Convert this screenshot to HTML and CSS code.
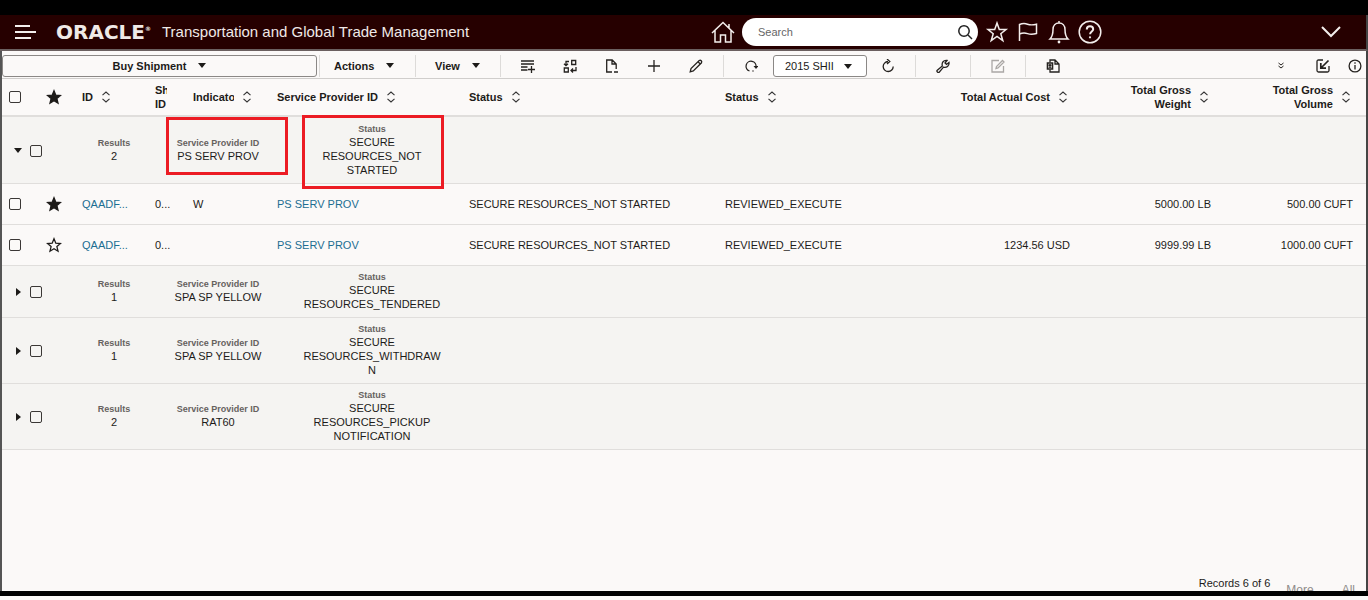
FILE: index.html
```html
<!DOCTYPE html>
<html lang="en">
<head>
  <meta charset="UTF-8" />
  <meta name="viewport" content="width=device-width, initial-scale=1" />
  <title>Transportation and Global Trade Management</title>
  <link rel="stylesheet" href="styles.css">
</head>
<body>

  <!-- Shared icons -->
  <svg class="sprite" aria-hidden="true">
    <symbol id="sort" viewBox="0 0 14 14"><path d="M3.500 5.200 7 2l3.500 3.200M3.500 8.800 7 12l3.500-3.200" fill="none" stroke="#333" stroke-width="1.1"/></symbol>
    <symbol id="star" viewBox="0 0 16 16"><path d="M8 1.800l1.800 4.400 4.700.3-3.600 3.100 1.100 4.600L8 11.700l-4 2.500 1.100-4.600L1.500 6.500l4.700-.3z" stroke-width="1.300" stroke-linejoin="miter"/></symbol>
  </svg>

  <header class="header">
    <button class="head-btn menu" aria-label="Menu"><svg width="22" height="16" viewBox="0 0 22 16"><path d="M0 2h15M0 8h21M0 14h16"/></svg></button>
    <div class="logo">ORACLE<sup>®</sup></div>
    <h1>Transportation and Global Trade Management</h1>
    <div class="head-tools">
      <button class="head-btn" aria-label="Home"><svg width="24" height="24" viewBox="0 0 24 24"><path d="M1 13 12 2.500 23 13M4 10.500V22h5.500v-7h5v7H20V10.500M18 8V4"/></svg></button>
      <div class="search">
        <input type="text" placeholder="Search" aria-label="Search" />
        <button aria-label="Run search"><svg width="16" height="16" viewBox="0 0 16 16"><circle cx="7" cy="7" r="5.200"/><path d="M11 11l4 4"/></svg></button>
      </div>
      <button class="head-btn" aria-label="Favorites"><svg width="24" height="24" viewBox="0 0 24 24"><path d="M12 3l2.300 6.500h6.700l-5.200 4.200 2 7L12 16.500l-5.800 4.200 2-7L3 9.500h6.700z"/></svg></button>
      <button class="head-btn" aria-label="Watchlist"><svg width="24" height="24" viewBox="0 0 24 24"><path d="M3.500 21V4.500c3-1.200 5.500-1.200 8-.3s5.500.9 9 0V13.500c-3.500 1-6.500 1-9 .1s-5-.9-8 .4"/></svg></button>
      <button class="head-btn" aria-label="Notifications"><svg width="24" height="24" viewBox="0 0 24 24"><path d="M12 1v2M3 19c2-2 3-4.500 3-9.500C6 5.500 8.500 3 12 3s6 2.500 6 6.500c0 5 1 7.500 3 9.500z"/><circle cx="12" cy="22" r="1.400" class="dot"/></svg></button>
      <button class="head-btn" aria-label="Help"><svg width="24" height="24" viewBox="0 0 24 24"><circle cx="12" cy="12" r="10.800"/><path d="M8.800 9.500c0-2 1.400-3.200 3.200-3.200s3.200 1.200 3.200 2.900c0 2.300-3.100 2.500-3.100 5.100" stroke-width="2"/><circle cx="12" cy="17.300" r="1.100" class="dot"/></svg></button>
      <button class="head-btn user-menu" aria-label="User menu"><svg width="20" height="14" viewBox="0 0 20 14"><path d="M1 2l9 9 9-9" stroke-width="2"/></svg></button>
    </div>
  </header>

  <main class="main">
    <div class="toolbar">
      <button class="screen-set">Buy Shipment <i class="caret"></i></button>
      <span class="sep flush"></span>
      <button class="menu-btn">Actions <i class="caret"></i></button>
      <span class="sep flush"></span>
      <button class="menu-btn view">View <i class="caret"></i></button>
      <span class="sep"></span>
      <button class="tool" aria-label="Add row"><svg width="14" height="14" viewBox="0 0 14 14"><path d="M0 2h13M0 5h13M0 8h6.500M0 11h6.500M10.500 7v7M7 10.500h7"/></svg></button>
      <button class="tool" aria-label="Swap"><svg width="14" height="14" viewBox="0 0 14 14"><path d="M8.700 1.500h4v4h-4zM1.300 9h4v4h-4zM6 2.500H3v4M1 4.700l2 2 2-2M13 8v3.500H8M10 9.500l-2 2 2 2"/></svg></button>
      <button class="tool" aria-label="New document"><svg width="14" height="14" viewBox="0 0 14 14"><path d="M7 13H1.700V1h5.500l4 4v5M7 1v4h4M9 13h4"/></svg></button>
      <button class="tool" aria-label="Add"><svg width="14" height="14" viewBox="0 0 14 14"><path d="M7 1v12M1 7h12"/></svg></button>
      <button class="tool" aria-label="Edit"><svg width="14" height="14" viewBox="0 0 14 14"><path d="M1.200 12.800l.8-3.300 8.200-8c1.600-.8 3.100.8 2.300 2.300l-8.200 8.200zM9 2.700l2.300 2.300"/></svg></button>
      <span class="sep"></span>
      <button class="tool" aria-label="Rerun"><svg width="14" height="14" viewBox="0 0 14 14"><path d="M5.500 12A5 5 0 1 1 12 8M8.500 12h1"/><path d="M9.500 7h5L12 10z" fill="#25221f" stroke="none"/></svg></button>
      <span class="select-wrap">
        <select aria-label="Layout"><option>2015 SHII</option></select>
        <i class="caret"></i>
      </span>
      <button class="tool" aria-label="Refresh"><svg width="14" height="14" viewBox="0 0 14 14"><path d="M7 2.500a5 5 0 1 0 5.200 5M6 0l2.800 2.500L6 5"/></svg></button>
      <span class="sep"></span>
      <button class="tool" aria-label="Settings"><svg width="14" height="14" viewBox="0 0 14 14"><path d="M1 11.500 6.300 7C5.500 3.500 7.500 1 11 1.500L9 4l1.500 1.500L13 3.500C13.500 7 10.500 9 7.500 8.200L3 13.500c-1 .5-2.500-1-2-2z"/></svg></button>
      <span class="sep"></span>
      <button class="tool" aria-label="Mass update" disabled><svg width="14" height="14" viewBox="0 0 14 14"><path d="M8 1.500H1v11.500h11.500V7M5 9.500l.5-2L11.500 1.500l1.500 1.500L7 9z"/></svg></button>
      <span class="sep"></span>
      <button class="tool" aria-label="Export to Excel"><svg width="14" height="14" viewBox="0 0 14 14"><path d="M4 3.500V1h5l4 4v8H4v-2.500M9 1v4h4"/><path d="M1.500 4h5v6h-5zM3 5.500l2 3M5 5.500l-2 3" stroke-width="1.600"/></svg></button>
      <div class="toolbar-right">
        <button class="tool" aria-label="More tools"><svg width="8" height="8" viewBox="0 0 8 8"><path d="M1.500 1 4 3l2.500-2M1.500 4 4 6l2.500-2" stroke-width="1"/></svg></button>
        <button class="tool" aria-label="Open"><svg width="14" height="14" viewBox="0 0 14 14"><path d="M7 1H2.500Q1 1 1 2.500v9Q1 13 2.500 13h9q1.500 0 1.500-1.500V7"/><path d="M12.500 1.500 5 9M4.800 4v5.200H10" stroke-width="1.700"/></svg></button>
        <button class="tool info" aria-label="Information"><svg width="14" height="14" viewBox="0 0 14 14"><circle cx="7" cy="7" r="5.900"/><path d="M7 6v4.500M7 3.300v1.400"/></svg></button>
      </div>
    </div>

    <div class="results">
      <table>
        <colgroup>
          <col class="c-check"><col class="c-star"><col class="c-id"><col class="c-ship"><col class="c-ind">
          <col class="c-prov"><col class="c-status"><col><col class="c-cost"><col class="c-weight"><col class="c-volume">
        </colgroup>
        <thead>
          <tr>
            <th class="check"><input type="checkbox" aria-label="Select all" /></th>
            <th class="fav"><svg class="star full"><use href="#star"/></svg></th>
            <th><div class="th">ID <svg class="sort"><use href="#sort"/></svg></div></th>
            <th><div class="clip short">Sh<br>ID</div></th>
            <th><div class="th"><span class="clip ind">Indicator</span> <svg class="sort"><use href="#sort"/></svg></div></th>
            <th><div class="th">Service Provider ID <svg class="sort"><use href="#sort"/></svg></div></th>
            <th><div class="th">Status <svg class="sort"><use href="#sort"/></svg></div></th>
            <th><div class="th">Status <svg class="sort"><use href="#sort"/></svg></div></th>
            <th class="num"><div class="th">Total Actual Cost <svg class="sort"><use href="#sort"/></svg></div></th>
            <th class="num"><div class="th"><span>Total Gross<br>Weight</span> <svg class="sort"><use href="#sort"/></svg></div></th>
            <th class="num"><div class="th"><span>Total Gross<br>Volume</span> <svg class="sort"><use href="#sort"/></svg></div></th>
          </tr>
        </thead>
        <tbody>
          <tr class="group">
            <td colspan="11">
              <div class="group-row">
                <button class="toggle" aria-label="Collapse group"><i class="caret"></i></button>
                <input type="checkbox" aria-label="Select group" />
                <div class="field count"><b>Results</b>2</div>
                <div class="field provider"><b>Service Provider ID</b>PS SERV PROV</div>
                <div class="field status"><b>Status</b>SECURE RESOURCES_NOT STARTED</div>
              </div>
            </td>
          </tr>
          <tr>
            <td class="check"><input type="checkbox" aria-label="Select row" /></td>
            <td class="fav"><svg class="star full"><use href="#star"/></svg></td>
            <td><a href="#">QAADF...</a></td>
            <td>0...</td>
            <td>W</td>
            <td><a href="#">PS SERV PROV</a></td>
            <td>SECURE RESOURCES_NOT STARTED</td>
            <td>REVIEWED_EXECUTE</td>
            <td class="num"></td>
            <td class="num">5000.00 LB</td>
            <td class="num">500.00 CUFT</td>
          </tr>
          <tr>
            <td class="check"><input type="checkbox" aria-label="Select row" /></td>
            <td class="fav"><svg class="star"><use href="#star"/></svg></td>
            <td><a href="#">QAADF...</a></td>
            <td>0...</td>
            <td></td>
            <td><a href="#">PS SERV PROV</a></td>
            <td>SECURE RESOURCES_NOT STARTED</td>
            <td>REVIEWED_EXECUTE</td>
            <td class="num">1234.56 USD</td>
            <td class="num">9999.99 LB</td>
            <td class="num">1000.00 CUFT</td>
          </tr>
          <tr class="group">
            <td colspan="11">
              <div class="group-row">
                <button class="toggle" aria-label="Expand group"><i class="caret closed"></i></button>
                <input type="checkbox" aria-label="Select group" />
                <div class="field count"><b>Results</b>1</div>
                <div class="field provider"><b>Service Provider ID</b>SPA SP YELLOW</div>
                <div class="field status"><b>Status</b>SECURE RESOURCES_TENDERED</div>
              </div>
            </td>
          </tr>
          <tr class="group">
            <td colspan="11">
              <div class="group-row">
                <button class="toggle" aria-label="Expand group"><i class="caret closed"></i></button>
                <input type="checkbox" aria-label="Select group" />
                <div class="field count"><b>Results</b>1</div>
                <div class="field provider"><b>Service Provider ID</b>SPA SP YELLOW</div>
                <div class="field status"><b>Status</b>SECURE RESOURCES_WITHDRAWN</div>
              </div>
            </td>
          </tr>
          <tr class="group">
            <td colspan="11">
              <div class="group-row">
                <button class="toggle" aria-label="Expand group"><i class="caret closed"></i></button>
                <input type="checkbox" aria-label="Select group" />
                <div class="field count"><b>Results</b>2</div>
                <div class="field provider"><b>Service Provider ID</b>RAT60</div>
                <div class="field status"><b>Status</b>SECURE RESOURCES_PICKUP NOTIFICATION</div>
              </div>
            </td>
          </tr>
        </tbody>
      </table>
      <!-- Callouts over the first group -->
      <div class="callout callout-provider"></div>
      <div class="callout callout-status"></div>
    </div>

    <div class="footer">
      <span>Records 6 of 6</span>
      <a href="#" class="more">More</a>
      <a href="#" class="all">All</a>
    </div>
  </main>
  <div class="bottom-strip"></div>

</body>
</html>
```
FILE: styles.css
```css
* { margin: 0; padding: 0; box-sizing: border-box; }
body {
  height: 100vh;
  display: flex;
  flex-direction: column;
  overflow: hidden;
  border-top: 15px solid #000;
  background: #fbf9f8;
  color: #1d1b19;
  font: 11px/14px "Liberation Sans", Arial, sans-serif;
}
button, input, select { font: inherit; color: inherit; }
button { background: none; border: none; cursor: pointer; }
svg { display: block; fill: none; }
a { color: #1c6e92; text-decoration: none; }
.sprite { position: absolute; width: 0; height: 0; }

/* Header */
.header {
  display: flex;
  align-items: center;
  height: 36px;
  flex: none;
  padding: 0 25px 1px 15px;
  background: #260000;
  border-right: 2px solid #444;
  border-bottom: 2px solid #6b6060;
  color: #efe9e7;
}
.head-btn svg { stroke: #f3eeec; stroke-width: 1.5; }
.head-btn .dot { fill: #f3eeec; stroke: none; }
.menu { margin-right: 19px; }
.menu svg { stroke-width: 2; }
.logo {
  width: 106px;
  white-space: nowrap;
  font: bold 20px/24px "DejaVu Sans", sans-serif;
}
.logo sup { font-size: 6px; line-height: 6px; vertical-align: 8px; }
h1 { font-size: 15px; line-height: 20px; font-weight: normal; white-space: nowrap; }
.head-tools {
  display: flex;
  align-items: center;
  gap: 7px;
  margin-left: auto;
}
.search {
  display: flex;
  align-items: center;
  width: 236px;
  height: 28px;
  padding: 0 5px 0 16px;
  background: #fff;
  border-radius: 14px;
}
.search input {
  flex: 1;
  min-width: 0;
  border: none;
  outline: none;
  background: none;
  color: #333;
}
.search input::placeholder { color: #666; opacity: 1; }
.search svg { stroke: #222; stroke-width: 1.5; }
.user-menu { margin-left: 212px; }

/* Toolbar */
.main {
  flex: 1;
  min-height: 0;
  display: flex;
  flex-direction: column;
  border-left: 2px solid #555;
  border-right: 2px solid #444;
}
.toolbar {
  display: flex;
  align-items: center;
  height: 28px;
  flex: none;
  padding-top: 2px;
  border-bottom: 1px solid #d0cecc;
}
.screen-set, .menu-btn {
  display: flex;
  align-items: center;
  height: 22px;
  font-weight: bold;
}
.screen-set {
  justify-content: center;
  gap: 12px;
  width: 315px;
  margin-right: 2px;
  border: 1px solid #8b8886;
  border-radius: 3px;
}
.menu-btn { gap: 12px; width: 95px; padding-left: 14px; }
.menu-btn.view { width: 84px; padding-left: 19px; }
.sep { width: 1px; height: 22px; margin: 0 6px; background: #dddbd9; }
.sep.flush { margin: 0; }
.view + .sep { margin-left: 0; }
.caret {
  border: 4px solid transparent;
  border-top: 5px solid #1d1b19;
  border-bottom: none;
}
.caret.closed {
  border: 4px solid transparent;
  border-left: 5px solid #1d1b19;
  border-right: none;
}
.tool {
  display: flex;
  justify-content: center;
  align-items: center;
  width: 42px;
  height: 22px;
}
.tool svg { stroke: #25221f; stroke-width: 1.3; }
.tool:disabled svg { stroke: #aaa7a5; }
.select-wrap { position: relative; width: 94px; height: 22px; margin-left: 1px; }
.select-wrap select {
  appearance: none;
  width: 100%;
  height: 100%;
  padding: 0 11px;
  background: #fff;
  border: 1px solid #8b8886;
  border-radius: 3px;
}
.select-wrap .caret { position: absolute; right: 15px; top: 9px; pointer-events: none; }
.toolbar-right { display: flex; margin-left: auto; }
.tool.info { width: 22px; }

/* Results table */
.results { position: relative; flex: 1; min-height: 0; }
table { width: 100%; table-layout: fixed; border-collapse: separate; border-spacing: 0; }
.c-check { width: 34px; }
.c-star { width: 36px; }
.c-id { width: 73px; }
.c-ship { width: 38px; }
.c-ind { width: 84px; }
.c-prov { width: 192px; }
.c-status { width: 256px; }
.c-cost { width: 133px; }
.c-weight { width: 141px; }
.c-volume { width: 145px; }
th, td {
  padding: 0 10px;
  border-bottom: 1px solid #e0dedc;
  text-align: left;
  vertical-align: middle;
  white-space: nowrap;
}
th { height: 38px; border-bottom-width: 2px; }
td { height: 41px; }
.check { padding: 0 7px; }
.num { text-align: right; }
.num:last-child { padding-right: 13px; }
.th { display: flex; align-items: center; gap: 6px; }
.num .th { justify-content: flex-end; }
.sort { width: 14px; height: 14px; flex: none; }
.clip { overflow: hidden; }
.clip.short { width: 12px; }
.clip.ind { width: 41px; }
.star { width: 16px; height: 16px; stroke: #1d1b19; }
.star.full { fill: #1d1b19; }
input[type="checkbox"] {
  display: block;
  appearance: none;
  width: 12px;
  height: 12px;
  border: 1px solid #3a3735;
  border-radius: 2px;
}
.group td { height: auto; padding: 0; background: #f5f4f2; }
.group-row {
  display: flex;
  align-items: center;
  padding: 7px 0 6px 9px;
}
.group ~ .group .group-row { padding-top: 6px; }
.toggle { display: flex; justify-content: center; width: 14px; margin-right: 5px; }
.field { text-align: center; white-space: normal; overflow-wrap: anywhere; }
.field b { display: block; font-size: 9px; line-height: 11px; color: #66625f; }
.count { width: 84px; margin-left: 30px; }
.provider { width: 124px; }
.status { width: 140px; margin-left: 22px; }
.callout { position: absolute; border: 3px solid #ec1c24; pointer-events: none; }
.callout-provider { left: 164px; top: 38px; width: 122px; height: 58px; }
.callout-status { left: 300px; top: 36px; width: 142px; height: 74px; }

/* Footer */
.footer {
  display: flex;
  justify-content: flex-end;
  gap: 16px;
  height: 15px;
  padding-right: 11px;
  overflow: hidden;
  flex: none;
}
.footer a { padding-top: 7px; font-size: 12px; color: #8f8c8a; }
.footer .all { margin-left: 12px; }
.bottom-strip { flex: none; height: 9px; border-top: 5px solid #000; }
```
